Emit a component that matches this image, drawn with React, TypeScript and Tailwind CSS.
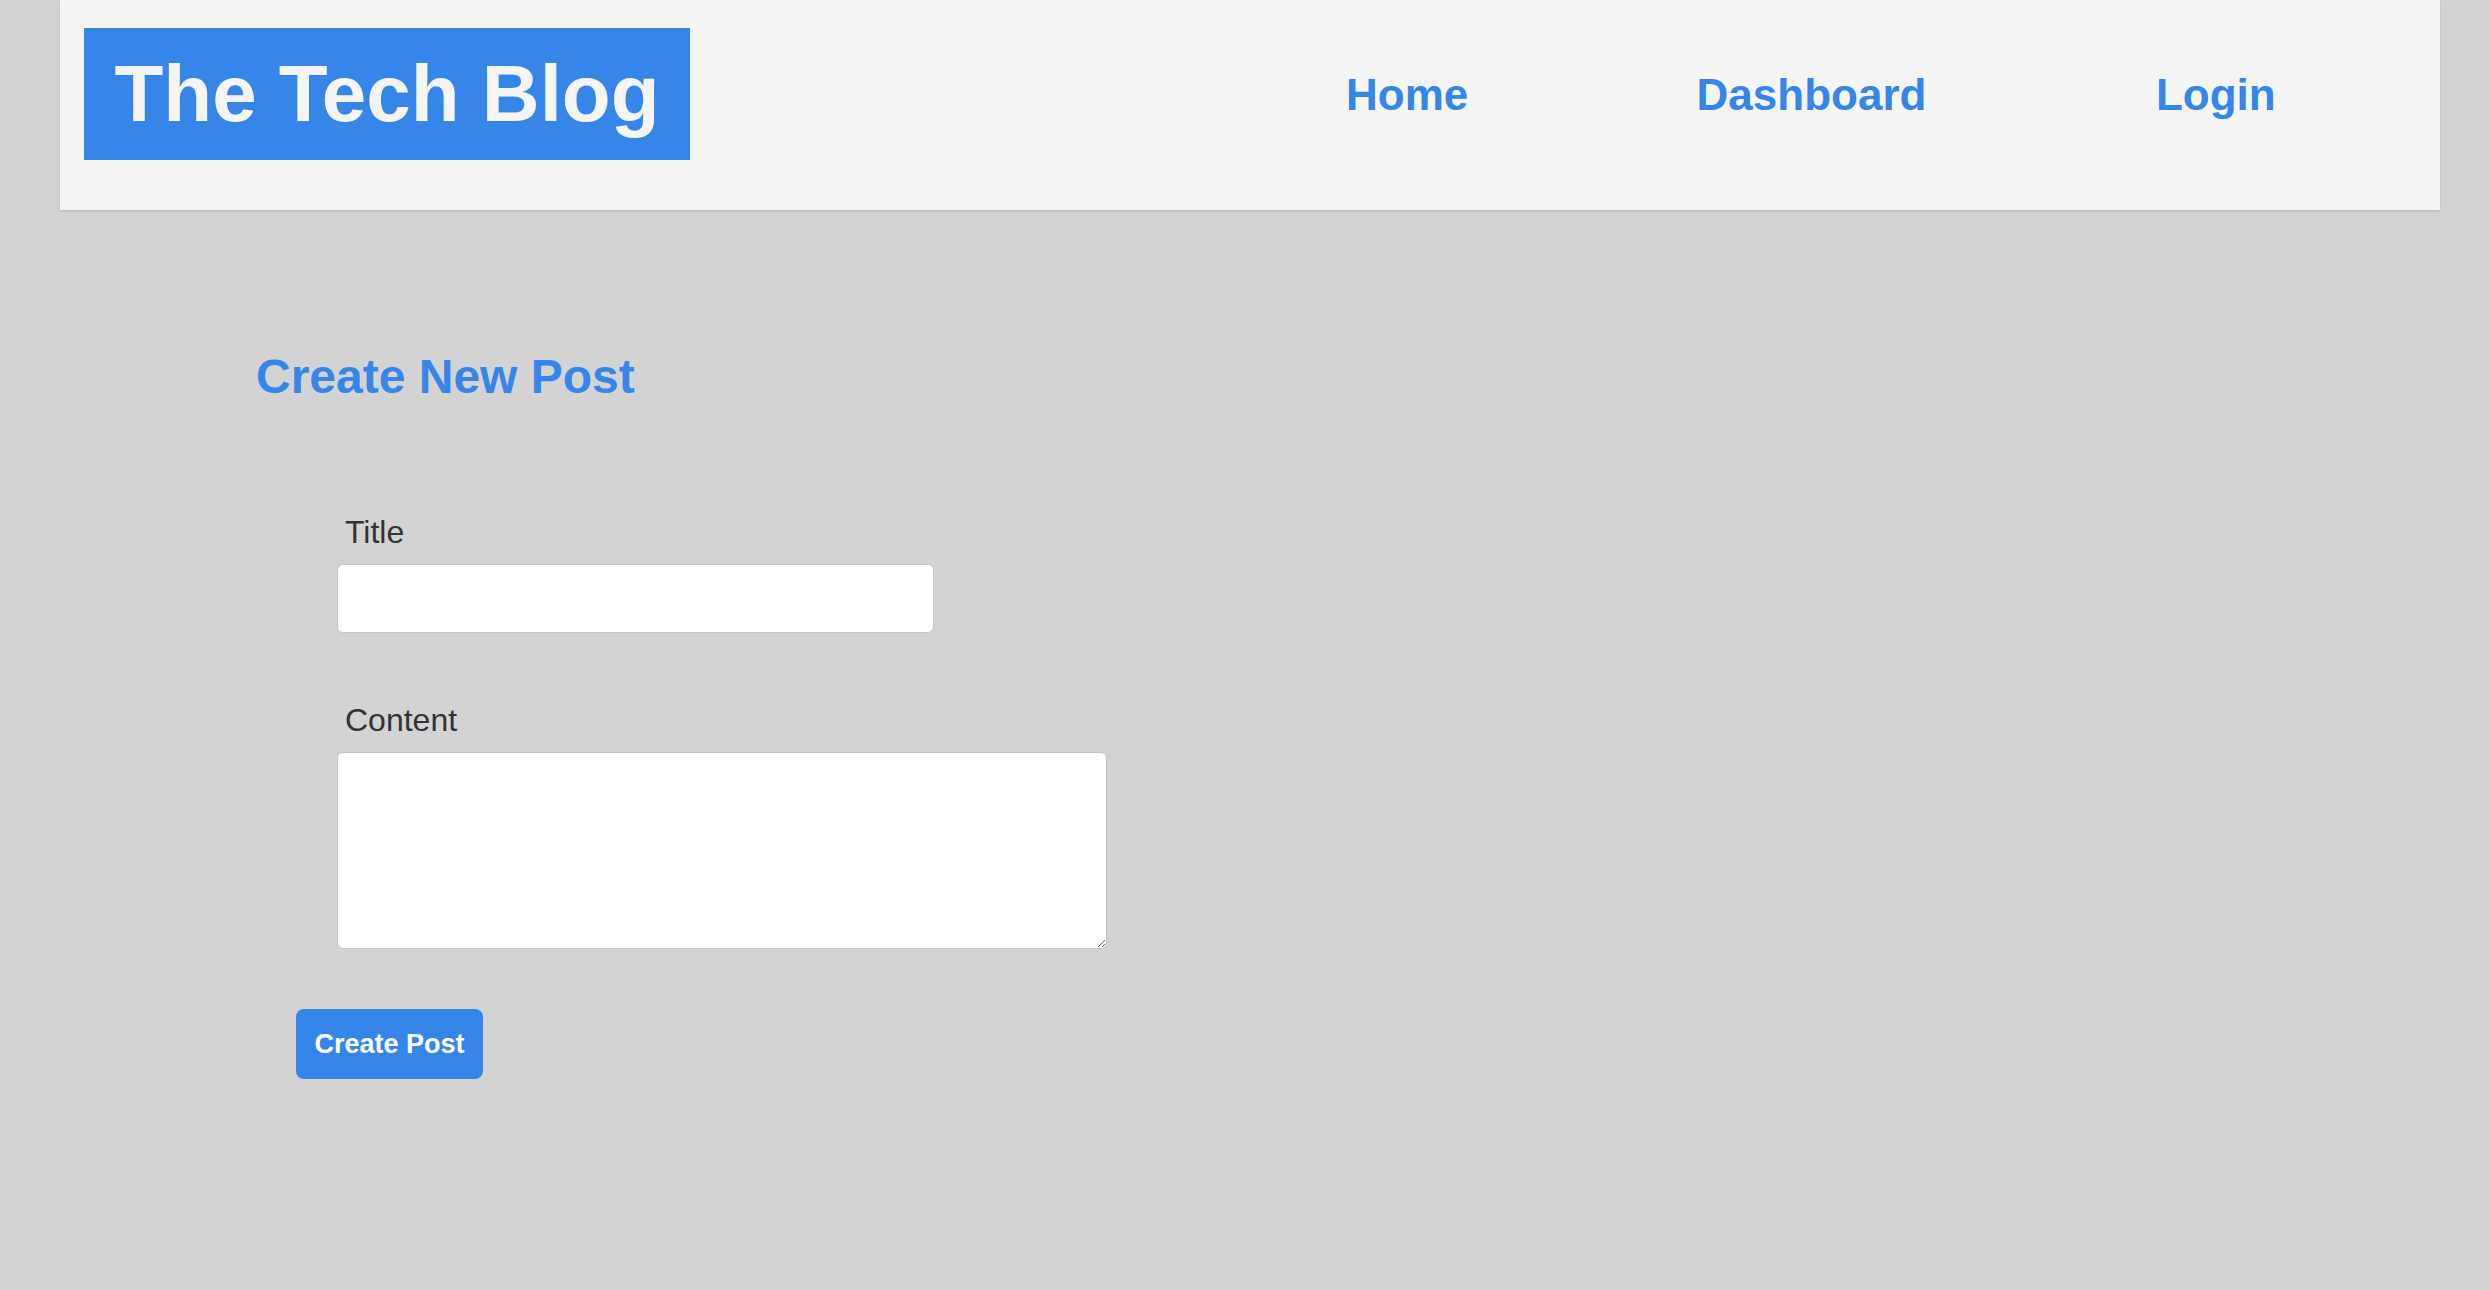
const font = { fontFamily: '"Liberation Sans", Arial, Helvetica, sans-serif' };

function Header() {
  return (
    <header className="ml-[60px] mr-[50px] flex items-center justify-between bg-[#f5f5f5] pt-[28px] pb-[50px] shadow-[0_1px_2px_rgba(0,0,0,0.12)]">
      <div className="ml-[24px] flex h-[132px] w-[606px] items-center justify-center bg-[#3586e8]">
        <h1 className="text-[80px] font-bold leading-[92px] text-[#f5f5f5]">The Tech Blog</h1>
      </div>
      <nav className="mr-[22px] grid w-[1213px] grid-cols-3">
        {["Home", "Dashboard", "Login"].map((item) => (
          <a key={item} href="#" className="text-center text-[44px] font-bold leading-[51px] text-[#3586e8]">
            {item}
          </a>
        ))}
      </nav>
    </header>
  );
}

export default function App() {
  return (
    <div className="min-h-screen bg-[#d3d3d3]" style={font}>
      <Header />
      <main>
        <h2 className="mt-[139px] pl-[256px] text-[48px] font-bold leading-[56px] text-[#3586e8]">Create New Post</h2>
        <form className="flex flex-col" onSubmit={(e) => e.preventDefault()}>
          <label htmlFor="title" className="mt-[109px] pl-[345px] text-[32px] leading-[37px] text-[#333333]">
            Title
          </label>
          <input
            id="title"
            type="text"
            className="mt-[13px] ml-[337px] block h-[69px] w-[597px] rounded-[6px] border border-[#c4c4c4] bg-white px-3 text-[24px] outline-none"
          />
          <label htmlFor="content" className="mt-[69px] pl-[345px] text-[32px] leading-[37px] text-[#333333]">
            Content
          </label>
          <textarea
            id="content"
            className="mt-[13px] ml-[337px] block h-[197px] w-[770px] rounded-[6px] border border-[#c4c4c4] bg-white p-3 text-[24px] outline-none"
          />
          <div className="mt-[60px] pl-[296px]">
            <button
              type="submit"
              className="h-[70px] w-[187px] rounded-[8px] bg-[#3586e8] text-[27px] font-bold text-white"
            >
              Create Post
            </button>
          </div>
        </form>
      </main>
    </div>
  );
}
